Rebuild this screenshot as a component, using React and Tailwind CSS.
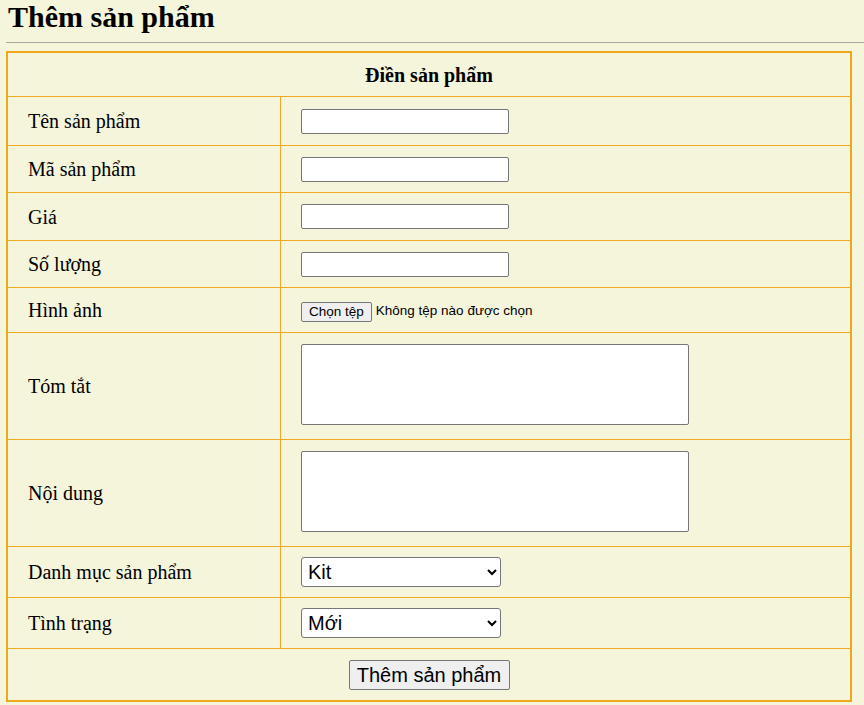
import { useState } from "react";

const line = "border-[#eeaa22]";

const textRows = [
  { label: "Tên sản phẩm", h: "h-[49px]" },
  { label: "Mã sản phẩm", h: "h-[47px]" },
  { label: "Giá", h: "h-[48px]" },
  { label: "Số lượng", h: "h-[47px]" },
];

const Label = ({ children, h }) => (
  <td className={`border-r border-b ${line} pl-[20px] align-middle ${h}`}>{children}</td>
);

const Field = ({ children }) => (
  <td className={`border-b ${line} pl-[20px] align-middle`}>{children}</td>
);

const App = () => {
  const [category, setCategory] = useState("kit");
  const [status, setStatus] = useState("moi");

  return (
    <div className="min-h-[705px] bg-[#f5f5dc] pt-[1px] font-['Liberation_Serif',serif] text-black">
      <h1 className="ml-[8px] text-[30px] font-bold leading-[32px]">Thêm sản phẩm</h1>
      <hr className="ml-[6px] mt-[9px] border-t border-[#a8a8a0]" />
      <table className="ml-[6px] mt-[8px] w-[846px] table-fixed border-separate border-spacing-0 border-2 border-[#efa81c] text-[20px]">
        <colgroup>
          <col className="w-[273px]" />
          <col />
        </colgroup>
        <tbody>
          <tr>
            <td colSpan={2} className={`h-[44px] border-b ${line} text-center font-bold`}>
              Điền sản phẩm
            </td>
          </tr>
          {textRows.map((row) => (
            <tr key={row.label}>
              <Label h={row.h}>{row.label}</Label>
              <Field>
                <input
                  type="text"
                  className="block h-[25px] w-[208px] rounded-[2px] border border-[#767676] bg-white"
                />
              </Field>
            </tr>
          ))}
          <tr>
            <Label h="h-[45px]">Hình ảnh</Label>
            <Field>
              <div className="flex items-center pt-[3px] font-['Liberation_Sans',sans-serif] text-[13.5px]">
                <button className="h-[20px] rounded-[2px] border border-[#767676] bg-[#efefef] px-[7px] leading-[16px]">
                  Chọn tệp
                </button>
                <span className="ml-[4px]">Không tệp nào được chọn</span>
              </div>
            </Field>
          </tr>
          {["Tóm tắt", "Nội dung"].map((label) => (
            <tr key={label}>
              <Label h="h-[107px]">{label}</Label>
              <Field>
                <textarea className="mb-[4px] block h-[81px] w-[388px] resize-none rounded-[2px] border border-[#767676] bg-white" />
              </Field>
            </tr>
          ))}
          <tr>
            <Label h="h-[51px]">Danh mục sản phẩm</Label>
            <Field>
              <select
                value={category}
                onChange={(e) => setCategory(e.target.value)}
                className="block h-[30px] w-[200px] rounded-[3px] border border-[#767676] bg-white pl-[2px] font-['Liberation_Sans',sans-serif] text-[20px]"
              >
                <option value="kit">Kit</option>
                <option value="module">Module</option>
              </select>
            </Field>
          </tr>
          <tr>
            <Label h="h-[51px]">Tình trạng</Label>
            <Field>
              <select
                value={status}
                onChange={(e) => setStatus(e.target.value)}
                className="block h-[30px] w-[200px] rounded-[3px] border border-[#767676] bg-white pl-[2px] font-['Liberation_Sans',sans-serif] text-[20px]"
              >
                <option value="moi">Mới</option>
                <option value="cu">Cũ</option>
              </select>
            </Field>
          </tr>
          <tr>
            <td colSpan={2} className="h-[51px] text-center align-middle">
              <button className="h-[30px] w-[161px] rounded-[2px] border border-[#767676] bg-[#efefef] font-['Liberation_Sans',sans-serif] text-[20px] leading-[26px]">
                Thêm sản phẩm
              </button>
            </td>
          </tr>
        </tbody>
      </table>
    </div>
  );
};

export default App;
